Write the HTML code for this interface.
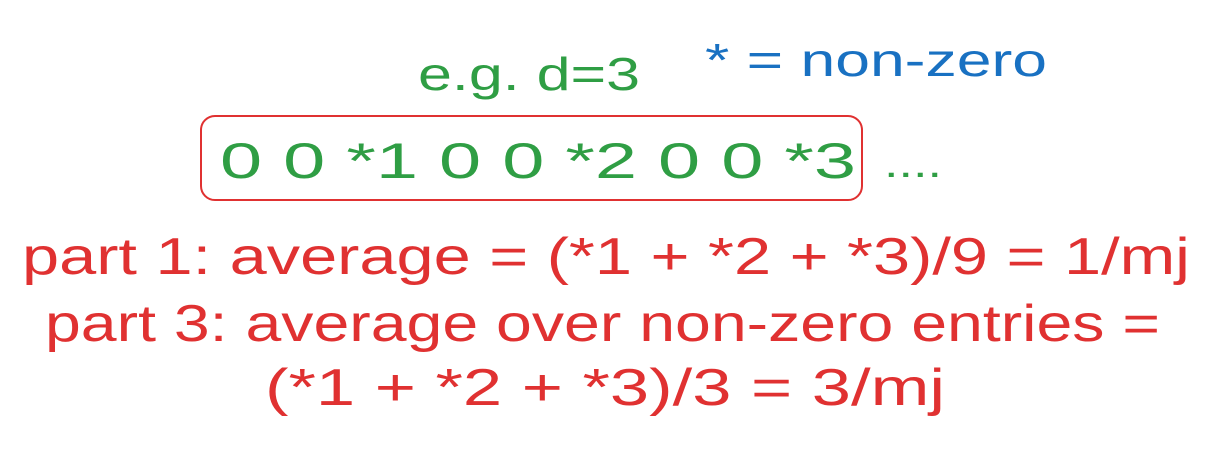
<!DOCTYPE html>
<html><head><meta charset="utf-8"><style>
html,body{margin:0;padding:0;background:#fff;width:1207px;height:449px;overflow:hidden}
svg text{font-family:"Liberation Sans",sans-serif}
</style></head><body>
<svg width="1207" height="449" viewBox="0 0 1207 449" xmlns="http://www.w3.org/2000/svg">
<text x="418" y="90" font-size="46" fill="#2f9e44" textLength="222" lengthAdjust="spacingAndGlyphs">e.g. d=3</text>
<text x="705" y="76" font-size="46" fill="#1971c2" textLength="342" lengthAdjust="spacingAndGlyphs">* = non-zero</text>
<rect x="201" y="116" width="661" height="84" rx="14" fill="none" stroke="#e03131" stroke-width="2"/>
<text x="220" y="178" font-size="50" fill="#2f9e44" textLength="636" lengthAdjust="spacingAndGlyphs">0 0 *1 0 0 *2 0 0 *3</text>
<text x="884" y="177" font-size="40" fill="#2f9e44" textLength="58" lengthAdjust="spacingAndGlyphs">....</text>
<text x="22" y="274" font-size="52" fill="#e03131" textLength="1168" lengthAdjust="spacingAndGlyphs">part 1: average = (*1 + *2 + *3)/9 = 1/mj</text>
<text x="45" y="341" font-size="52" fill="#e03131" textLength="1115" lengthAdjust="spacingAndGlyphs">part 3: average over non-zero entries =</text>
<text x="265" y="405" font-size="52" fill="#e03131" textLength="680" lengthAdjust="spacingAndGlyphs">(*1 + *2 + *3)/3 = 3/mj</text>
</svg>
</body></html>
